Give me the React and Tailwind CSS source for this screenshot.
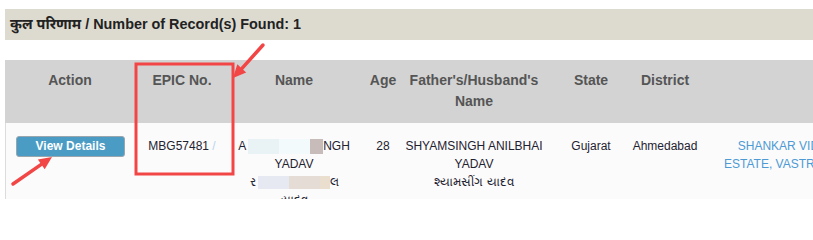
import React from "react";

const font = { fontFamily: '"Liberation Sans", Arial, "Noto Sans", sans-serif' };

function HeadCell({ w, children }) {
  return (
    <div className={`${w} shrink-0 flex flex-col items-center pt-[10px] leading-[21px] whitespace-nowrap`}>
      {children}
    </div>
  );
}

function Cell({ w, children, className = "" }) {
  return (
    <div className={`${w} shrink-0 flex flex-col items-center pt-[14px] leading-[18px] whitespace-nowrap ${className}`}>
      {children}
    </div>
  );
}

export default function App() {
  return (
    <div className="relative w-[813px] h-[224px] overflow-hidden bg-white" style={font}>
      <div className="pl-[5px] pt-[9px]">
        <div className="h-[31px] w-[900px] bg-[#dddbd0] flex items-center pl-[5px] font-bold text-[14.4px] text-[#222]">
          कुल परिणाम / Number of Record(s) Found: 1
        </div>

        <div className="mt-[20px] w-[900px] h-[63px] bg-[#d3d3d3] flex font-bold text-[14px] text-[#555]">
          <HeadCell w="w-[130px]">Action</HeadCell>
          <HeadCell w="w-[94px]">EPIC No.</HeadCell>
          <HeadCell w="w-[130px]">Name</HeadCell>
          <HeadCell w="w-[48px]">Age</HeadCell>
          <HeadCell w="w-[134px]">
            <span>Father's/Husband's</span>
            <span>Name</span>
          </HeadCell>
          <HeadCell w="w-[100px]">State</HeadCell>
          <HeadCell w="w-[48px]">District</HeadCell>
          <HeadCell w="w-[194px]"> </HeadCell>
        </div>

        <div className="w-[900px] h-[76px] bg-[#fbfbfb] border-l border-[#dcdcdc] overflow-hidden flex text-[12px] text-[#1f2230]">
          <div className="w-[129px] shrink-0 pt-[13px] pl-[10px]">
            <button className="w-[109px] h-[21px] rounded-[3px] bg-[#4a9cc5] border border-[#9aa6ad] text-white font-bold text-[12px] leading-[19px] flex items-center justify-center">
              View Details
            </button>
          </div>
          <Cell w="w-[94px]">
            <span>
              MBG57481<span className="text-[#b8d4ee]"> /</span>
            </span>
          </Cell>
          <Cell w="w-[130px]">
            <div className="flex items-center h-[18px]">
              <span>A</span>
              <span className="ml-[2px] w-[31px] h-[15px] bg-[#e9f2f5]" />
              <span className="w-[31px] h-[15px] bg-[#f2fafb]" />
              <span className="w-[13px] h-[15px] bg-[#c8bcba]" />
              <span>NGH</span>
            </div>
            <span>YADAV</span>
            <div className="flex items-center h-[18px]">
              <span>ર</span>
              <span className="ml-[2px] w-[31px] h-[13px] bg-[#e6e9f1]" />
              <span className="w-[31px] h-[13px] bg-[#e5dcd5]" />
              <span className="w-[10px] h-[13px] bg-[#eadfcf]" />
              <span>લ</span>
            </div>
            <span>યાદવ</span>
          </Cell>
          <Cell w="w-[48px]">
            <span>28</span>
          </Cell>
          <Cell w="w-[134px]">
            <span>SHYAMSINGH ANILBHAI</span>
            <span>YADAV</span>
            <span>શ્યામસીંગ યાદવ</span>
          </Cell>
          <Cell w="w-[100px]">
            <span>Gujarat</span>
          </Cell>
          <Cell w="w-[48px]">
            <span>Ahmedabad</span>
          </Cell>
          <Cell w="w-[194px]" className="text-[#4d9ad4]">
            <span>SHANKAR VIDYA</span>
            <span>ESTATE, VASTRAPUR</span>
          </Cell>
        </div>
      </div>

      <svg className="absolute left-0 top-0 pointer-events-none" width="813" height="224" viewBox="0 0 813 224">
        <rect x="136" y="64" width="97" height="110" fill="none" stroke="#f24646" strokeWidth="3" />
        <line x1="263" y1="45" x2="242" y2="68.4" stroke="#f24646" strokeWidth="3.5" strokeLinecap="round" />
        <polygon points="233,78 246.2,72.4 237.3,64.3" fill="#f24646" />
        <line x1="13" y1="184" x2="41.3" y2="164.4" stroke="#f24646" strokeWidth="3.5" strokeLinecap="round" />
        <polygon points="52,157 44.7,169.3 37.9,159.5" fill="#f24646" />
      </svg>
    </div>
  );
}
